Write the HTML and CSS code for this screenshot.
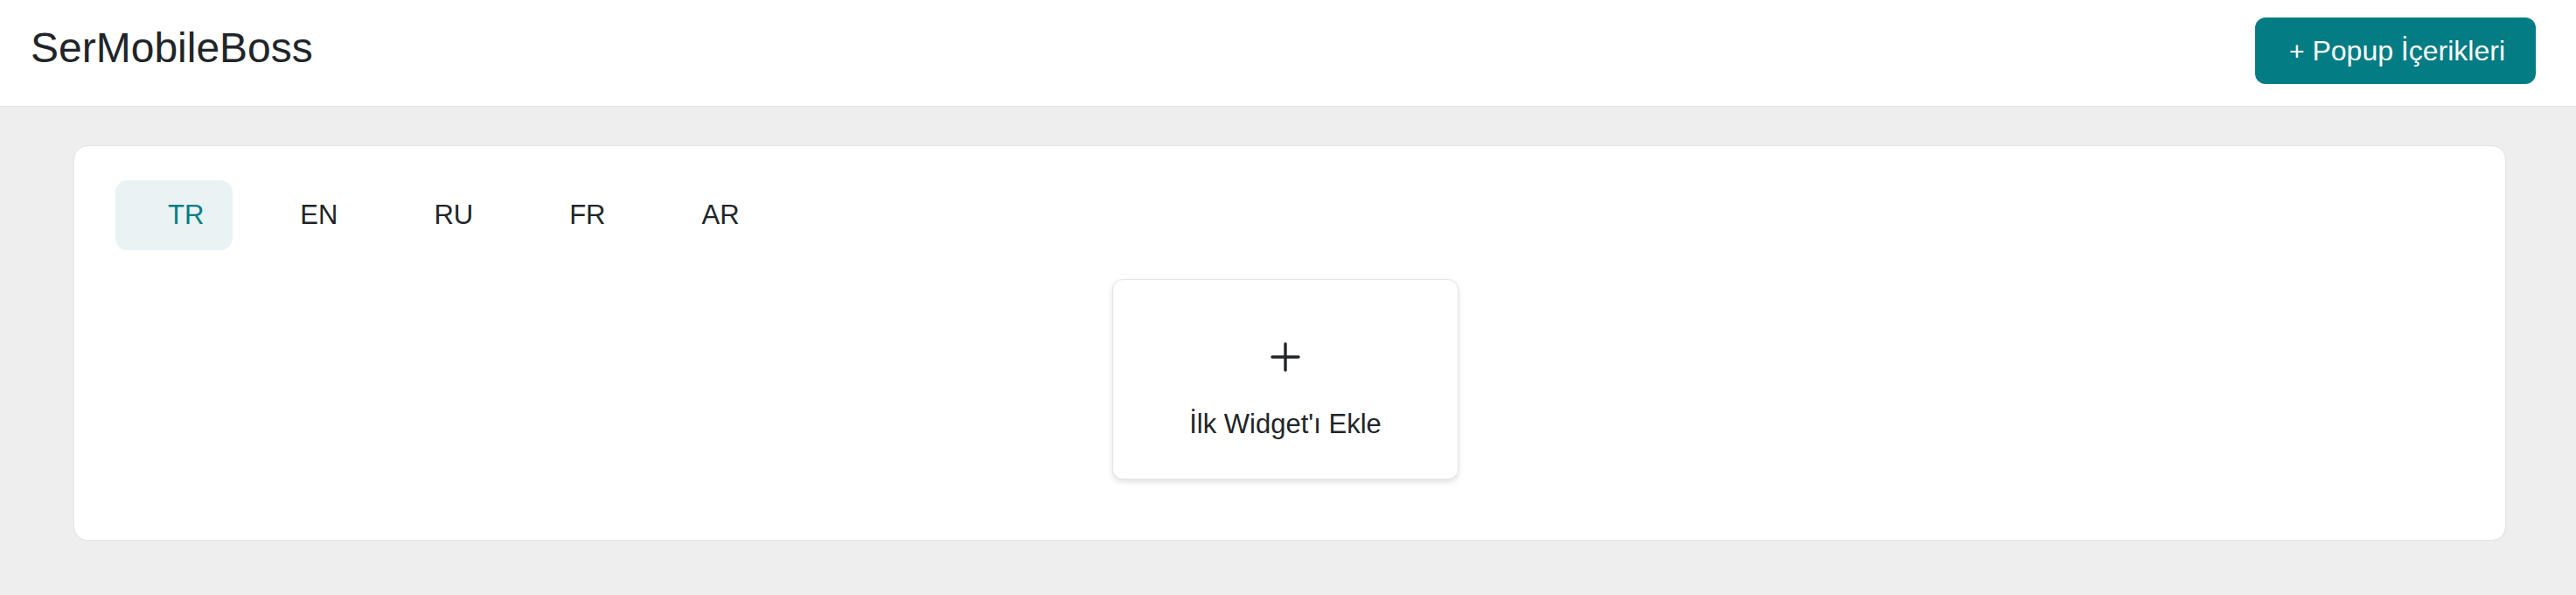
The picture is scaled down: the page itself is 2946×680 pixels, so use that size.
FILE: index.html
```html
<!DOCTYPE html>
<html lang="tr">
<head>
  <meta charset="UTF-8" />
  <meta name="viewport" content="width=device-width, initial-scale=1.0" />
  <title>SerMobileBoss</title>
  <link rel="stylesheet" href="styles.css">
</head>
<body>
  <header class="topbar">
    <div class="brand">SerMobileBoss</div>
    <button class="btn-primary"><span class="plus">+</span> Popup İçerikleri</button>
  </header>

  <main class="page">
    <section class="panel">
      <nav class="lang-tabs">
        <div class="lang-tab active">TR</div>
        <div class="lang-tab">EN</div>
        <div class="lang-tab">RU</div>
        <div class="lang-tab">FR</div>
        <div class="lang-tab">AR</div>
      </nav>

      <div class="add-widget">
        <svg class="add-icon" width="34" height="34" viewBox="0 0 34 34">
          <path d="M17 2v30M2 17h30" stroke="#212529" stroke-width="3.4" stroke-linecap="round" fill="none"/>
        </svg>
        <div class="add-label">İlk Widget'ı Ekle</div>
      </div>
    </section>
  </main>
</body>
</html>
```

FILE: styles.css
```css
:root {
  --bg: #eeeeee;
  --card: #ffffff;
  --accent: #037c84;
  --accent-soft: #e9f3f4;
  --text: #212529;
  --border: #e3e3e3;
}

body {
  margin: 0;
  font-family: "Liberation Sans", Arial, sans-serif;
  background-color: var(--bg);
  color: var(--text);
}

.topbar {
  display: flex;
  justify-content: space-between;
  align-items: center;
  padding: 20px 46px 25px 35px;
  background-color: var(--card);
  border-bottom: 1px solid var(--border);
}

.brand {
  font-size: 48px;
  line-height: 60px;
  margin-top: -6px;
}

.btn-primary {
  height: 76px;
  width: 321px;
  padding: 0 0 0 4px;
  font-family: inherit;
  font-size: 32px;
  color: #fff;
  background-color: var(--accent);
  border: none;
  border-radius: 12px;
  cursor: pointer;
}

.btn-primary .plus {
  font-weight: 300;
  font-size: 30px;
}

.page {
  padding: 44px 80px 0 84px;
}

.panel {
  background-color: var(--card);
  border: 1px solid var(--border);
  border-radius: 16px;
  padding: 39px 47px 69px;
  box-shadow: 0 1px 3px rgba(0, 0, 0, 0.03);
}

.lang-tabs {
  display: flex;
  gap: 17px;
}

.lang-tab {
  height: 80px;
  line-height: 80px;
  padding: 0 33px 0 60px;
  font-size: 31px;
  border-radius: 14px;
  cursor: pointer;
}

.lang-tab.active {
  background-color: var(--accent-soft);
  color: var(--accent);
}

.add-widget {
  box-sizing: border-box;
  width: 396px;
  height: 229px;
  margin: 33px auto 0;
  padding-top: 71px;
  display: flex;
  flex-direction: column;
  align-items: center;
  background-color: var(--card);
  border: 1px solid #e5e5e5;
  border-radius: 12px;
  box-shadow: 0 3px 6px rgba(0, 0, 0, 0.12);
  cursor: pointer;
  position: relative;
  left: -5px;
}

.add-icon {
  display: block;
}

.add-label {
  margin-top: 42px;
  font-size: 31px;
  line-height: 36px;
}
```
